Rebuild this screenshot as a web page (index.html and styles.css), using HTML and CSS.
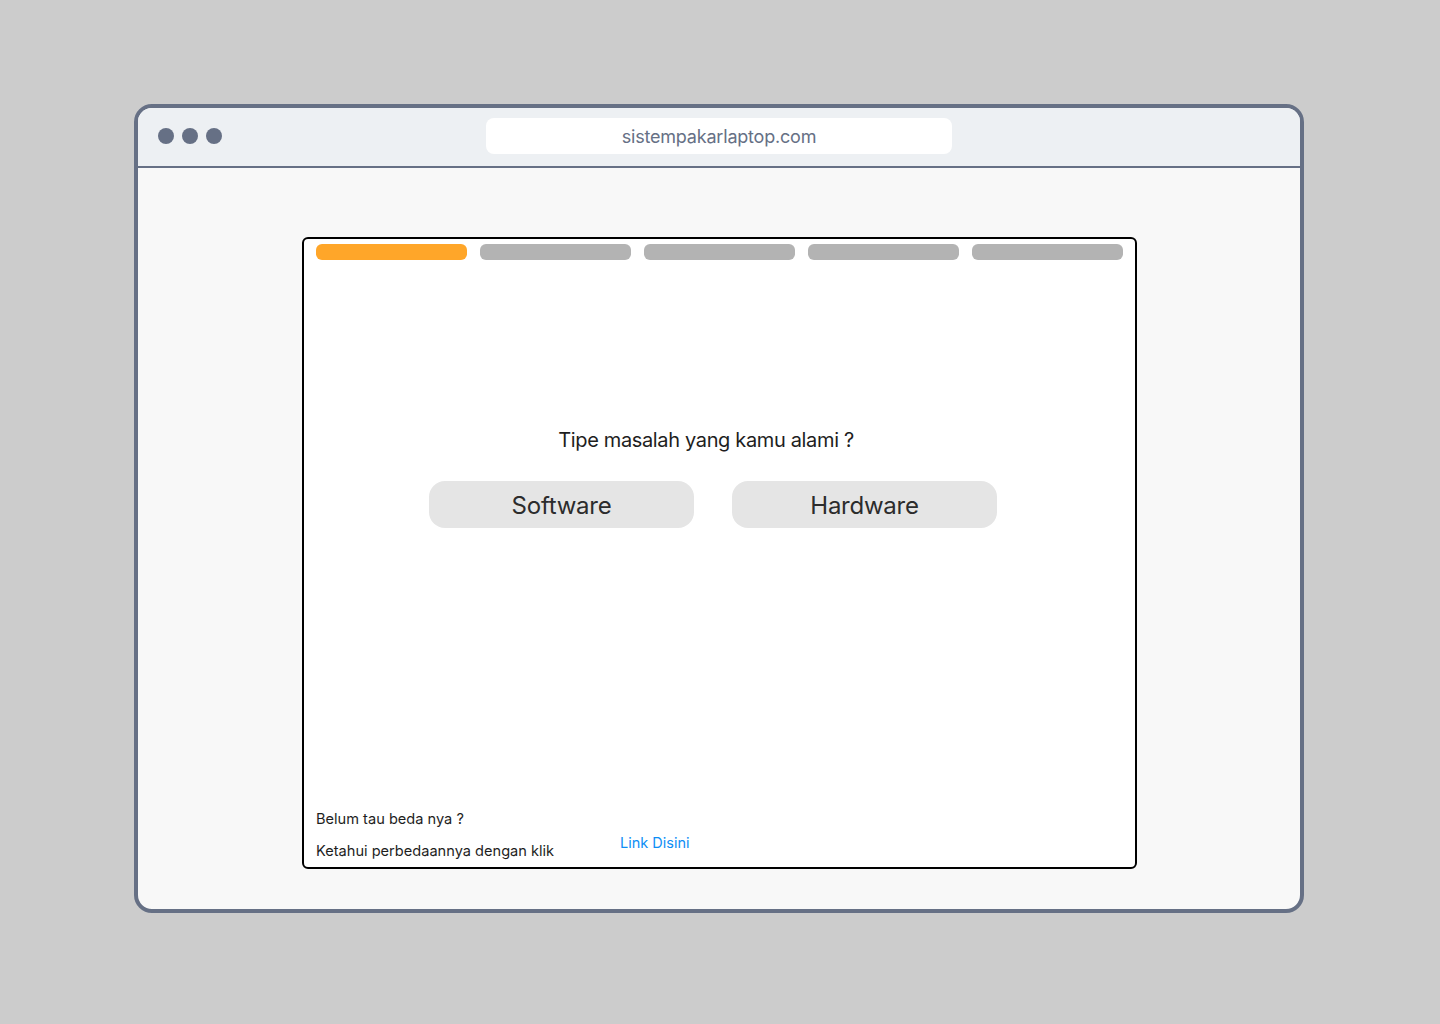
FILE: index.html
```html
<!DOCTYPE html>
<html lang="id">
<head>
<meta charset="utf-8">
<title>Sistem Pakar Laptop</title>
<link rel="stylesheet" href="styles.css">
</head>
<body>
<div class="frame">
  <div class="topbar">
    <div class="dots"><span class="dot"></span><span class="dot"></span><span class="dot"></span></div>
    <div class="url">sistempakarlaptop.com</div>
  </div>
  <div class="content">
    <div class="card">
      <div class="steps">
        <span class="step active"></span>
        <span class="step"></span>
        <span class="step"></span>
        <span class="step"></span>
        <span class="step"></span>
      </div>
      <div class="question">
        <p class="title">Tipe masalah yang kamu alami ?</p>
        <div class="choices">
          <button class="choice">Software</button>
          <button class="choice">Hardware</button>
        </div>
      </div>
      <div class="footer">
        <div class="hint">
          <p>Belum tau beda nya ?</p>
          <p>Ketahui perbedaannya dengan klik</p>
        </div>
        <a class="link" href="#">Link Disini</a>
      </div>
    </div>
  </div>
</div>
</body>
</html>
```

FILE: styles.css
```css
* { box-sizing: border-box; }
html, body { margin: 0; padding: 0; }
body {
  background: #cccccc;
  font-family: Inter, "Noto Sans", sans-serif;
  width: 1440px;
  height: 1024px;
  padding: 104px 0 0 134px;
}
.frame {
  width: 1170px;
  height: 809px;
  border: 4px solid #667085;
  border-radius: 18px;
  overflow: hidden;
  display: flex;
  flex-direction: column;
  background: #f8f8f8;
}
.topbar {
  height: 60px;
  flex: none;
  background: #edf0f3;
  border-bottom: 2px solid #667085;
  display: flex;
  align-items: flex-start;
  position: relative;
}
.dots {
  display: flex;
  gap: 8px;
  padding: 20px 0 0 20px;
}
.dot {
  width: 16px;
  height: 16px;
  border-radius: 50%;
  background: #667085;
}
.url {
  position: absolute;
  left: 348px;
  top: 10px;
  width: 466px;
  height: 36px;
  background: #ffffff;
  border-radius: 8px;
  color: #667085;
  font-size: 18px;
  letter-spacing: -0.2px;
  line-height: 38px;
  text-align: center;
}
.content {
  flex: 1;
  padding: 69px 163px 40px 164px;
}
.card {
  width: 835px;
  height: 632px;
  background: #ffffff;
  border: 2px solid #000000;
  border-radius: 6px;
  display: flex;
  flex-direction: column;
  padding: 5px 12px 7px 12px;
}
.steps {
  display: flex;
  gap: 13px;
}
.step {
  flex: 1;
  height: 16px;
  border-radius: 6px;
  background: #b3b3b3;
}
.step.active { background: #ffa629; }
.question {
  display: flex;
  flex-direction: column;
  align-items: center;
  margin-top: 168px;
}
.title {
  margin: 0 27px 0 0;
  font-size: 20px;
  letter-spacing: -0.35px;
  line-height: 24px;
  color: #1e1e1e;
}
.choices {
  display: flex;
  gap: 38px;
  margin: 29px 13px 0 0;
}
.choice {
  width: 265px;
  height: 47px;
  border: none;
  border-radius: 16px;
  background: #e5e5e5;
  font-family: Inter, "Noto Sans", sans-serif;
  font-size: 24px;
  letter-spacing: -0.25px;
  color: #2c2c2c;
  padding: 2px 0 0 0;
}
.footer {
  margin-top: auto;
  display: flex;
  align-items: flex-start;
}
.hint {
  width: 304px;
  display: flex;
  flex-direction: column;
  gap: 14px;
}
.hint p {
  margin: 0;
  font-size: 14.6px;
  line-height: 18px;
  color: #1e1e1e;
}
.link {
  margin-top: 24px;
  font-size: 14.5px;
  line-height: 18px;
  color: #0d8ef5;
  text-decoration: none;
}
```
